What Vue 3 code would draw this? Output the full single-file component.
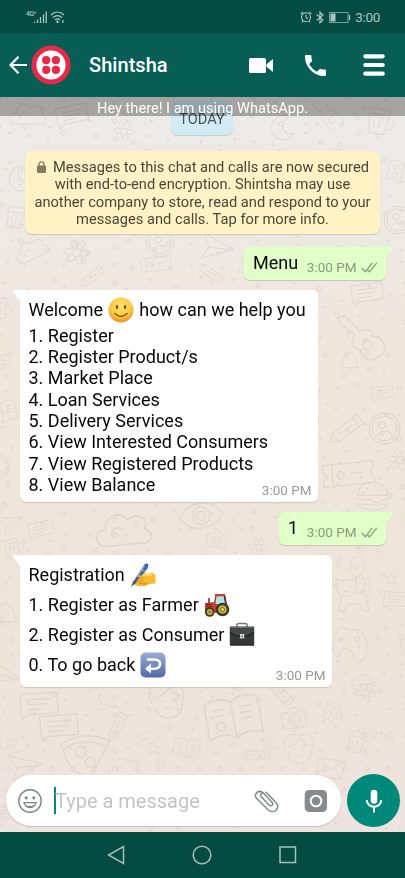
<script setup>
const menu = [
  '1. Register',
  '2. Register Product/s',
  '3. Market Place',
  '4. Loan Services',
  '5. Delivery Services',
  '6. View Interested Consumers',
  '7. View Registered Products',
  '8. View Balance',
]

// Wallpaper motifs: [shape id, x, y, rotation, scale]
const doodles = [
  ['cloud', 8, 100, 0, 1], ['note', 55, 103, -12, 1], ['flower', 110, 118, 0, 0.9], ['moon', 265, 112, 15, 1], ['guitar', 310, 100, 0, 0.8], ['cup', 365, 105, 10, 1],
  ['moon', 2, 165, -20, 1], ['cup', 4, 205, 10, 0.8], ['book', 386, 160, 12, 0.8], ['ring', 383, 205, 0, 1],
  ['cloud', 14, 238, -25, 0.9], ['flower', 60, 236, 0, 1.1], ['ring', 145, 228, 0, 1], ['plane', 200, 233, 8, 1], ['ticket', 140, 256, -6, 0.7], ['pencil', 82, 270, -40, 0.8], ['pencil', 190, 267, 35, 0.8],
  ['cup', -12, 295, 0, 0.8], ['flower', -12, 350, 0, 0.8], ['book', -14, 400, -12, 0.8], ['ring', -17, 453, 0, 0.9],
  ['note', 350, 281, -8, 1], ['guitar', 335, 315, 0, 1.2], ['bell', 337, 350, 0, 0.8], ['note', 371, 384, -6, 0.7], ['pencil', 330, 425, -38, 1.1], ['ring', 368, 412, 0, 1.1], ['ticket', 321, 462, -6, 1.15], ['burger', 354, 480, 0, 1.1], ['flower', 385, 445, 0, 1],
  ['plane', 0, 510, -25, 0.7], ['note', 28, 519, -12, 0.8], ['cloud', 93, 510, -6, 1.5], ['eye', 178, 502, -4, 1.1], ['camera', 205, 530, 6, 0.7], ['cup', 3, 535, -12, 0.7], ['flower', 246, 535, 0, 0.8],
  ['star', 385, 572, 0, 0.8], ['guitar', 342, 548, 60, 0.7], ['note', 382, 590, 4, 0.8], ['cat', 335, 575, 0, 1], ['pad', 334, 625, 0, 1], ['pencil', 378, 638, 85, 0.6], ['burger', 350, 673, -8, 0.8], ['bell', -10, 600, 0, 1], ['plane', -14, 660, 15, 1],
  ['note', 18, 690, -3, 1.2], ['note', 38, 712, -4, 1.2], ['plane', 93, 695, 15, 0.7], ['face', 145, 681, -5, 1.2], ['book', 202, 697, -10, 1.5], ['ring', 225, 667, 0, 0.8], ['camera', 280, 705, -8, 0.9], ['cup', 320, 702, 25, 0.7], ['pencil', 255, 680, 48, 1], ['flower', 352, 680, 0, 0.9],
  ['cloud', 3, 735, -15, 0.7], ['plane', 8, 752, -8, 1], ['pizza', 59, 730, 12, 1.3], ['pencil', 108, 718, -65, 0.9], ['cloud', 137, 728, -20, 0.6], ['book', 172, 738, 10, 0.7], ['star', 147, 742, 0, 0.8], ['flower', 153, 756, 0, 0.5], ['ring', 262, 736, 0, 0.45], ['face', 281, 732, 0, 1], ['cup', 345, 730, 12, 0.8], ['ring', 362, 727, 0, 0.5], ['envelope', 315, 757, 10, 0.9], ['star', 384, 730, 0, 0.7], ['pencil', 240, 750, 0, 0.8], ['cloud', 107, 755, 0, 0.9],
  ['flower', 378, 780, 0, 0.8], ['moon', 330, 810, 0, 0.5], ['note', -8, 805, 0, 0.7],
]

// Small dots scattered between the motifs on a jittered grid
const specks = []
for (let row = 0; row < 41; row++) {
  for (let col = 0; col < 20; col++) {
    const n = (row * 37 + col * 53 + row * col * 11) % 23
    specks.push({ x: col * 21 + (n % 7) * 2, y: 97 + row * 18 + (n % 5) * 3, r: n % 3 === 0 ? 2.2 : 1.1 })
  }
}
</script>

<template>
  <div class="phone">
    <svg class="wallpaper" viewBox="0 0 405 878" aria-hidden="true">
      <defs>
        <g id="cloud"><path d="M7 24C-2 22 1 12 8 13C8 3 20 1 23 8C31 3 38 9 34 15C42 18 37 26 31 24Z M12 19C10 13 17 10 20 15" /></g>
        <g id="note"><path d="M2 3H33V20H8L3 24V20H2Z M8 8H28 M8 12H25 M8 16H20" /></g>
        <g id="flower"><circle cx="15" cy="15" r="4" /><path d="M12 11C7 4 14 0 16 9C20 1 27 5 19 13C29 12 28 20 19 18C23 27 15 29 14 20C8 27 2 21 10 17C1 17 2 9 11 12" /></g>
        <g id="moon"><path d="M22 2C8 2 2 17 12 25C20 30 29 25 30 18C21 23 12 14 22 2Z M13 12L15 14 M15 20L18 20" /></g>
        <g id="guitar"><path d="M2 2L8 1L21 14C26 10 33 13 31 18C42 17 45 32 36 35C28 41 20 34 22 29C14 29 12 21 17 17L4 7Z" /><circle cx="27" cy="25" r="4" /></g>
        <g id="cup"><path d="M3 4H24L21 29H6Z M5 10H22 M22 12C34 11 31 25 21 24 M9 16L10 24 M15 15V24" /></g>
        <g id="book"><path d="M2 4C10 1 16 2 20 5C25 1 32 1 38 4V28C31 25 25 26 20 29C14 25 8 25 2 28Z M20 5V29 M7 9H15 M7 13H14 M25 9H33 M25 13H33 M25 17H33" /><circle cx="11" cy="20" r="3" /></g>
        <g id="ring"><circle cx="15" cy="15" r="14" /><circle cx="15" cy="15" r="11" /><circle cx="13" cy="12" r="3" /><path d="M8 22C12 16 20 16 22 22" /></g>
        <g id="plane"><path d="M2 2L34 14L3 27L9 15Z M9 15H34" /></g>
        <g id="ticket"><path d="M2 2H46V9C42 10 42 14 46 15V21H2V15C6 14 6 10 2 9Z M10 2V21 M17 8L21 12L17 16L14 12Z M26 11H38" /></g>
        <g id="pencil"><path d="M2 6L8 1H36V11H8Z M8 1V11 M31 1V11 M12 6H28" /></g>
        <g id="bell"><path d="M4 22C9 18 5 4 16 4C26 4 22 18 28 22Z M13 23C14 28 19 27 19 23 M16 4V1" /></g>
        <g id="burger"><path d="M3 14C4 -2 29 -2 31 14Z M2 16C8 22 11 14 17 19C23 23 26 15 32 18 M3 22H31C30 29 5 29 3 22 M11 7L13 8 M18 5L20 6 M24 9L26 10" /></g>
        <g id="eye"><path d="M1 14C12 -3 33 -2 41 13C31 28 10 28 1 14Z" /><circle cx="21" cy="13" r="8" /><circle cx="21" cy="13" r="4" /></g>
        <g id="camera"><path d="M2 7H9L12 3H20L23 7H29V25H2Z" /><circle cx="16" cy="16" r="7" /><circle cx="16" cy="16" r="4" /></g>
        <g id="face"><path d="M5 18C-1 6 11 -1 18 4C28 -2 36 9 30 20C31 35 9 35 7 21 M7 14C15 14 19 7 21 6C23 12 27 13 30 14 M15 22C17 25 20 25 22 22 M13 17H15 M22 17H24" /></g>
        <g id="pizza"><path d="M2 13C14 2 25 0 38 3L29 34C15 33 7 25 2 13Z M5 16C15 6 26 5 36 8" /><circle cx="18" cy="16" r="4" /><circle cx="27" cy="22" r="4" /></g>
        <g id="star"><path d="M8 1L10 6L15 6L11 10L13 15L8 12L3 15L5 10L1 6L6 6Z" /></g>
        <g id="envelope"><path d="M2 3H31V23H2Z L17 14L31 3 M2 23L12 12 M31 23L21 12" /></g>
        <g id="cat"><path d="M2 13L1 4L7 6Q12 3 16 6L21 1L21 13Q20 21 11 21Q3 21 2 13Z M7 21L3 36H10L13 29H24L28 36H34L31 23Q38 12 33 3Q29 2 30 8L29 16L21 18 M7 12V13 M16 12V13 M9 16Q11 18 14 16" /></g>
        <g id="pad"><path d="M6 2L15 5Q24 3 30 9Q36 22 30 34Q24 42 20 34L17 25L9 23L3 33Q-3 26 1 12Q2 6 6 2Z M8 10V18 M4 14H12" /><circle cx="23" cy="14" r="3" /></g>
      </defs>
      <g class="lines">
        <use v-for="(d, i) in doodles" :key="i" :href="'#' + d[0]" :transform="`translate(${d[1]} ${d[2]}) rotate(${d[3]} 16 14) scale(${d[4]})`" />
        <circle v-for="(s, i) in specks" :key="'s' + i" :cx="s.x" :cy="s.y" :r="s.r" />
      </g>
    </svg>

    <header class="status">
      <div class="signals">
        <span class="net">4G⁺</span>
        <svg width="13" height="12" viewBox="0 0 13 12"><path d="M.5 10.5V12M3.5 8.5V12M6.5 6V12M9.5 3.5V12M12.2 .5V12" stroke="#a9c6c1" stroke-width="1.3" /></svg>
        <svg class="wifi" width="15" height="12" viewBox="0 0 15 12" fill="none" stroke="#a9c6c1" stroke-width="1.3"><path d="M1 4C5 .2 10 .2 14 4M3 6.5C6 4 9 4 12 6.5M5 9C7 7.4 8.500 7.400 10 9" /><circle cx="7.500" cy="10.800" r=".6" /><path d="M12.800 9V12" /></svg>
      </div>
      <div class="system">
        <svg width="12" height="12" viewBox="0 0 12 12" fill="none" stroke="#a9c6c1" stroke-width="1.1"><circle cx="6" cy="6.300" r="4.500" /><path d="M6 3.600V6.500L8 7.700M.6 3L3 .8M11.400 3L9 .8M2.800 10L1.800 11.500M9.200 10L10.200 11.500" /></svg>
        <svg width="8" height="13" viewBox="0 0 8 13" fill="none" stroke="#a9c6c1" stroke-width="1.2"><path d="M.7 3.500L7 9L4 11.800V1.200L7 4L.7 9.500" /></svg>
        <svg class="battery" width="22" height="11" viewBox="0 0 22 11"><rect x=".5" y=".5" width="18.500" height="10" fill="none" stroke="#73a099" /><rect x="1.500" y="1.500" width="5" height="8" fill="#a9c6c1" /><path d="M20.500 3V8" stroke="#a9c6c1" stroke-width="1.300" /></svg>
        <span class="clock">3:00</span>
      </div>
    </header>

    <nav class="toolbar">
      <svg class="back" width="18" height="18" viewBox="0 0 18 18" fill="none" stroke="#fff" stroke-width="2.200"><path d="M18 9H2M9.500 .8L1.500 9L9.500 17.200" /></svg>
      <svg class="avatar" width="40" height="40" viewBox="0 0 40 40"><circle cx="20" cy="20" r="19.600" fill="#e9294a" /><circle cx="20" cy="20" r="14.600" fill="#fff" /><g fill="#e9294a"><circle cx="15.200" cy="15.200" r="4.100" /><circle cx="24.900" cy="15.200" r="4.100" /><circle cx="15.200" cy="24.900" r="4.100" /><circle cx="24.900" cy="24.900" r="4.100" /></g></svg>
      <h1>Shintsha</h1>
      <svg class="video" width="24" height="15" viewBox="0 0 24 15" fill="#fff"><rect width="17" height="15" rx="1.600" /><path d="M17.500 6.300L23.300 1.500Q24 1 24 2V13Q24 14 23.300 13.500L17.500 8.700Z" /></svg>
      <svg class="call" width="21" height="21" viewBox="3 3 18 18" fill="#fff"><path d="M6.620 10.790c1.440 2.830 3.760 5.140 6.590 6.590l2.200-2.200c.27-.27.67-.36 1.020-.24 1.120.37 2.330.57 3.570.57.55 0 1 .45 1 1V20c0 .55-.45 1-1 1-9.390 0-17-7.610-17-17 0-.55.45-1 1-1h3.500c.55 0 1 .45 1 1 0 1.250.2 2.450.57 3.570.11.35.03.74-.25 1.020l-2.200 2.200z" /></svg>
      <svg class="more" width="22" height="22" viewBox="0 0 22 22"><path d="M2.300 2.300H19.700M2.300 11H19.700M2.300 19.700H19.700" stroke="#fff" stroke-width="4.200" stroke-linecap="round" /></svg>
    </nav>

    <div class="about">Hey there! I am using WhatsApp.</div>

    <main class="chat">
      <div class="day"><span>TODAY</span></div>
      <section class="notice">
        <p><svg class="lock" width="9" height="12" viewBox="0 0 9 12"><rect y="4.500" width="9" height="7.500" rx="1" fill="#827c63" /><path d="M2 5V3.200C2 .1 7 .1 7 3.200V5" fill="none" stroke="#827c63" stroke-width="1.300" /></svg>Messages to this chat and calls are now secured</p>
        <p>with end-to-end encryption. Shintsha may use</p>
        <p>another company to store, read and respond to your</p>
        <p>messages and calls. Tap for more info.</p>
      </section>

      <article class="bubble out wide">
        <span class="body">Menu</span><time>3:00 PM</time>
        <svg class="ticks" width="17" height="11" viewBox="0 0 17 11"><path d="M.7 6L4.500 9.700L11.300 .8M6.800 8.100L8.500 9.800L15.800 .8" /></svg>
        <svg class="tail" width="9" height="13" viewBox="0 0 9 13"><path d="M0 0H7.500Q9 .2 8.200 1.400L0 12Z" fill="#e1ffc7" /></svg>
      </article>

      <article class="bubble in first">
        <svg class="tail" width="9" height="13" viewBox="0 0 9 13"><path d="M9 0H1.500Q0 .2 .8 1.400L9 12Z" fill="#fff" /></svg>
        <p class="lead">Welcome
          <svg class="emoji" width="26" height="26" viewBox="0 0 26 26"><defs><radialGradient id="smile" cx=".5" cy=".35" r=".65"><stop offset="0" stop-color="#ffe66b" /><stop offset=".65" stop-color="#fdc73e" /><stop offset="1" stop-color="#ec8d24" /></radialGradient></defs><circle cx="13" cy="13" r="12.500" fill="url(#smile)" /><ellipse cx="9" cy="10" rx="1.300" ry="2" fill="#755021" /><ellipse cx="17" cy="10" rx="1.300" ry="2" fill="#755021" /><path d="M7 16.500Q13 22.500 19 16.500" fill="none" stroke="#825316" stroke-width="1.300" stroke-linecap="round" /></svg>
          how can we help you</p>
        <p v-for="item in menu" :key="item">{{ item }}</p>
        <time>3:00 PM</time>
      </article>

      <article class="bubble out narrow">
        <span class="body">1</span><time>3:00 PM</time>
        <svg class="ticks" width="17" height="11" viewBox="0 0 17 11"><path d="M.7 6L4.500 9.700L11.300 .8M6.800 8.100L8.500 9.800L15.800 .8" /></svg>
        <svg class="tail" width="9" height="13" viewBox="0 0 9 13"><path d="M0 0H7.500Q9 .2 8.200 1.400L0 12Z" fill="#e1ffc7" /></svg>
      </article>

      <article class="bubble in second">
        <svg class="tail" width="9" height="13" viewBox="0 0 9 13"><path d="M9 0H1.500Q0 .2 .8 1.400L9 12Z" fill="#fff" /></svg>
        <p>Registration
          <svg class="emoji" width="26" height="26" viewBox="0 0 26 26"><path d="M3.500 22L8 14Q12 8.500 15.500 10.500L16 13L21 11Q23 10.500 25.500 13V21.500L20 22Q13 25.500 6 23.500Z" fill="#f9b931" /><path d="M11 13L16 12.500L22 13" fill="none" stroke="#ffdb6a" stroke-width="2" /><path d="M8 20L13 18.500M9 22L15 20.500M13 23L18 21" stroke="#d88317" stroke-width=".9" /><path d="M4 18.500L14.500 2.500Q17 .5 18.500 2.500L17.500 6.500L7.500 18.500L5 21Z" fill="#3f66aa" /><path d="M14.500 4L7 15" stroke="#8bacd7" stroke-width="1.300" fill="none" /><path d="M12 8L16 10" stroke="#e0b34b" stroke-width="1" /><path d="M3.500 18.500L7 20L1 25Z" fill="#435575" /><path d="M8 14Q11 14 12.500 16L10 19" fill="none" stroke="#f5aa25" stroke-width="2.200" /></svg></p>
        <p>1. Register as Farmer
          <svg class="emoji" width="26" height="26" viewBox="0 0 26 26"><path d="M12 3.500H20.500L22 13H10.500Z" fill="#b4e2ef" stroke="#a5301f" stroke-width="1.400" /><path d="M11 2H21V4H11Z" fill="#d04328" /><path d="M1 11L10.500 10L13 14H24V18L17 21H3L1 18Z" fill="#c8402a" /><path d="M2 12.500H8M2 14.500H8M2 16.500H8" stroke="#6b231b" stroke-width="1" /><path d="M5 11V6M20.500 4L22.500 14" stroke="#5b2c24" stroke-width="1.500" /><circle cx="18.500" cy="17.500" r="6.800" fill="#3b382f" /><circle cx="18.500" cy="17.500" r="4.300" fill="#cdb535" /><circle cx="18.500" cy="17.500" r="2" fill="#f0de5e" stroke="#6b612a" /><circle cx="5.700" cy="20" r="4.800" fill="#3b382f" /><circle cx="5.700" cy="20" r="2.900" fill="#cdb535" /><circle cx="5.700" cy="20" r="1.200" fill="#7e6d2b" /></svg></p>
        <p>2. Register as Consumer
          <svg class="emoji" width="26" height="26" viewBox="0 0 26 26"><path d="M8 5V3Q8 1.500 10 1.500H16Q18 1.500 18 3V5" fill="none" stroke="#77797a" stroke-width="1.500" /><rect x=".8" y="4.500" width="24.400" height="19" rx="1" fill="#363739" /><path d="M1 5H25V10Q18 15 13 14Q7 15 1 10Z" fill="#454648" /><path d="M1 10Q7 15 13 14Q19 15 25 10M1 23H25" fill="none" stroke="#202123" stroke-width="1.200" /><path d="M2 5.500H24" stroke="#77797b" stroke-width=".7" /><rect x="11" y="12" width="4.300" height="4.500" fill="#d1d1d1" /><path d="M13.200 13.500V15.500" stroke="#555" /></svg></p>
        <p>0. To go back
          <svg class="emoji" width="26" height="26" viewBox="0 0 26 26"><defs><linearGradient id="key" x2="0" y2="1"><stop stop-color="#9badd6" /><stop offset="1" stop-color="#5069a7" /></linearGradient></defs><rect x=".5" y=".5" width="25" height="25" rx="5" fill="url(#key)" /><path d="M7 7.500H14.500C22 7.500 22 16.700 14.500 16.700H10" fill="none" stroke="#fff" stroke-width="2.600" /><path d="M11 11.500V21.500L5 16.700Z" fill="#fff" /></svg></p>
        <time>3:00 PM</time>
      </article>
    </main>

    <footer class="composer">
      <div class="field">
        <svg class="face" width="24" height="24" viewBox="0 0 24 24" fill="none" stroke="#7d8588"><circle cx="12" cy="12" r="11.200" stroke-width="1.400" /><circle cx="8.200" cy="8.800" r="1.600" fill="#7d8588" stroke="none" /><circle cx="15.800" cy="8.800" r="1.600" fill="#7d8588" stroke="none" /><path d="M6 13.700H18Q16.800 18.500 12 18.500Q7.200 18.500 6 13.700Z" stroke-width="1.300" /><path d="M7.600 16Q12 18 16.400 16Q14.500 18.500 12 18.500Q9.500 18.500 7.600 16" fill="#7d8588" stroke="none" /></svg>
        <div class="entry"><i></i><span>Type a message</span></div>
        <svg class="clip" width="25" height="24" viewBox="0 0 25 24" fill="none" stroke="#81898b" stroke-width="1.500" stroke-linecap="round"><path d="M7.500 8L14.500 15.500C17.500 18.500 20 15.500 17.800 13L9.300 4.100C4.800-.2-1.200 5.100 3 9.800L14 20.800C20 26 27.500 18.500 21.500 13L12 3.200M7.500 8C5 5.200 8.500 2.500 10.500 5" /></svg>
        <svg class="camera" width="24" height="24" viewBox="0 0 24 24"><rect x=".7" y="1" width="22.300" height="22" rx="4.500" fill="#858b8f" /><circle cx="12" cy="12" r="5.300" fill="none" stroke="#fff" stroke-width="2" /></svg>
      </div>
      <div class="mic"><svg width="18" height="24" viewBox="0 0 18 24"><rect x="5.700" y=".8" width="6.600" height="14" rx="3.300" fill="#fff" /><path d="M1.800 11C1.800 20 16.200 20 16.200 11M9 18V23.500" fill="none" stroke="#fff" stroke-width="2" /></svg></div>
    </footer>

    <div class="keys">
      <svg width="18" height="20" viewBox="0 0 18 20"><path d="M16.500 1.500V18.500L1.500 10Z" /></svg>
      <svg width="20" height="20" viewBox="0 0 20 20"><circle cx="10" cy="10" r="8.800" /></svg>
      <svg width="18" height="18" viewBox="0 0 18 18"><rect x="1" y="1" width="15.500" height="15.500" /></svg>
    </div>
  </div>
</template>

<style>
body { margin: 0; }
</style>

<style scoped>
.phone { position: relative; display: flex; flex-direction: column; width: 405px; height: 878px; overflow: hidden; font-family: Roboto, sans-serif; background: linear-gradient(#ecebe7 140px, #efe8e2 260px, #efe6dc 350px, #eee4da 650px, #eee3de 820px); }
.phone svg { flex: none; }
.phone p, h1 { margin: 0; }
.wallpaper { position: absolute; left: 0; top: 0; width: 405px; height: 878px; }
.lines { fill: none; stroke: #d6cec7; stroke-width: 1; opacity: .65; }
.status { position: relative; box-sizing: border-box; height: 33px; padding: 0 25px 0 26px; background: #044c42; display: flex; align-items: center; justify-content: space-between; color: #a9c6c1; }
.signals, .system { display: flex; align-items: center; }
.net { width: 8px; font-size: 7px; font-weight: 500; align-self: flex-start; white-space: nowrap; letter-spacing: -.5px; margin-top: -1px; }
.wifi { margin-left: 3px; }
.system { padding-top: 1px; gap: 3px; }
.battery { margin-left: 2px; }
.clock { font-size: 13.5px; letter-spacing: -.3px; margin-left: 1px; }
.system svg:first-child { margin-right: 1px; }
.toolbar { position: relative; box-sizing: border-box; height: 64px; background: #075e54; display: flex; align-items: center; padding-left: 9px; }
.avatar { margin-left: 4px; }
h1 { width: 160px; margin-left: 18px; font-size: 20px; line-height: 24px; font-weight: 500; letter-spacing: .05px; color: #fff; }
.call { margin-left: 32px; }
.more { margin-left: 37px; }
.about { position: relative; height: 19px; box-sizing: border-box; background: rgba(0,0,0,.3); color: #fff; font-size: 14.6px; line-height: 22px; text-align: center; z-index: 2; }
.chat { position: relative; flex: 1; display: flex; flex-direction: column; }
.day { height: 35px; display: flex; justify-content: center; margin-top: -16px; }
.day span { width: 62px; height: 35px; box-sizing: border-box; padding-top: 10px; margin-right: 1px; border-radius: 7px; background: #d4eaf4; box-shadow: 0 1px 1px #c5cdcf; color: #48545a; font-size: 14.5px; line-height: 20px; text-align: center; }
.notice { width: 355px; height: 83px; margin: 16px 0 0 25px; padding-top: 8px; box-sizing: border-box; border-radius: 7px; background: #fff3c5; box-shadow: 0 1px 1px #cec8b8; color: #494638; font-size: 14.68px; line-height: 17.3px; text-align: center; white-space: nowrap; }
.notice p:first-child { letter-spacing: -.02px; margin-left: 1px; }
.lock { margin-right: 7px; vertical-align: -1px; }
.bubble { position: relative; box-sizing: border-box; border-radius: 6px; background: #fff; box-shadow: 0 1px 1px #cbc2ba; font-size: 18px; color: #080808; }
.bubble time { font-size: 13.5px; color: #999; line-height: 16px; white-space: nowrap; }
.tail { position: absolute; top: 0; }
.in { margin-left: 19.5px; padding-left: 9px; border-top-left-radius: 0; }
.in .tail { left: -8px; }
.in time { position: absolute; right: 6.5px; bottom: 4px; }
.out { height: 33px; align-self: flex-end; margin-right: 19.5px; background: #e1ffc7; border-top-right-radius: 0; display: flex; padding: 5px 8px 0 9.5px; }
.out .body { line-height: 22px; }
.out time { margin: 7px 0 0 auto; color: #899b7c; }
.ticks { margin: 10px 0 0 4px; fill: none; stroke: #899b7c; stroke-width: 1.300; }
.out .tail { right: -8px; }
.wide { width: 142px; margin-top: 13px; }
.narrow { width: 107px; margin-top: 10px; }
.first { width: 298.5px; height: 212px; margin-top: 10px; padding-top: 6px; }
.first p { line-height: 21.330px; height: 21.330px; }
.first .lead { line-height: 27px; height: 28.7px; white-space: nowrap; }
.emoji { width: 26px; height: 26px; margin-left: .3px; vertical-align: -7px; }
.lead .emoji { margin-right: 1px; }
.second { width: 312.5px; height: 132px; margin-top: 10px; padding-top: 4.5px; }
.second p { height: 30.300px; line-height: 30px; }
.composer { position: relative; height: 59px; display: flex; align-items: flex-start; padding-left: 6px; gap: 6px; }
.field { width: 335px; height: 51px; margin-top: 2px; box-sizing: border-box; border-radius: 26px; background: #fff; box-shadow: 0 1px 1px #c9bfb9; display: flex; align-items: center; padding-left: 11.5px; }
.entry { display: flex; align-items: center; margin-left: 12px; width: 200px; }
.entry i { width: 2px; height: 27px; background: #00897b; }
.entry span { color: #c3c5c5; font-size: 20px; line-height: 26px; margin-left: -.5px; }
.camera { margin-left: 25px; }
.mic { width: 53px; height: 53px; margin-top: 1px; border-radius: 50%; background: #00897b; display: flex; align-items: center; justify-content: center; }
.keys { position: relative; box-sizing: border-box; height: 46px; background: #044c42; display: flex; align-items: center; padding-left: 107px; gap: 67px; }
.keys svg { fill: none; stroke: #a8beba; stroke-width: 1.500; }
</style>
